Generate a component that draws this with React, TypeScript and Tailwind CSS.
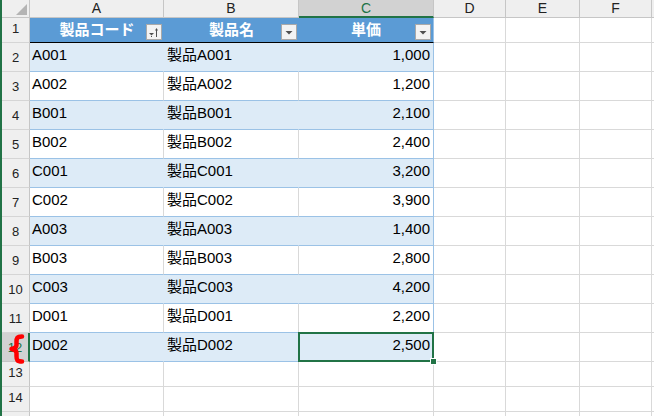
const rows = [
  ["A001", "製品A001", "1,000"],
  ["A002", "製品A002", "1,200"],
  ["B001", "製品B001", "2,100"],
  ["B002", "製品B002", "2,400"],
  ["C001", "製品C001", "3,200"],
  ["C002", "製品C002", "3,900"],
  ["A003", "製品A003", "1,400"],
  ["B003", "製品B003", "2,800"],
  ["C003", "製品C003", "4,200"],
  ["D001", "製品D001", "2,200"],
  ["D002", "製品D002", "2,500"],
];

const font = { fontFamily: '"Liberation Sans", "Noto Sans CJK JP", sans-serif' };

function FilterButton({ sorted }: { sorted?: boolean }) {
  return (
    <div className="absolute right-[2px] top-[6px] w-[16px] h-[16px] bg-[#f3f3f3] border border-[#a9a9a9] flex items-center justify-center">
      {sorted ? (
        <svg width="12" height="12" viewBox="0 0 12 12">
          <path d="M1 7h5l-2.5 2.5z" fill="#505050" />
          <path d="M3 10h1v1H3z" fill="#505050" />
          <path d="M8.5 3v8" stroke="#505050" strokeWidth="1" />
          <path d="M7 4.5L8.5 2 10 4.5z" fill="#505050" />
        </svg>
      ) : (
        <svg width="12" height="12" viewBox="0 0 12 12">
          <path d="M2.5 5h7L6 8.5z" fill="#505050" />
        </svg>
      )}
    </div>
  );
}

function RowHeader({ n, h, selected }: { n?: number; h: string; selected?: boolean }) {
  return (
    <div
      className={`${h} w-[28px] shrink-0 flex items-end justify-center pb-[4px] text-[13px] border-b ${
        selected
          ? "bg-[#d2d2d2] text-[#217346] border-r-2 border-r-[#217346] border-b-[#c6c6c6]"
          : "bg-[#efefef] text-[#222] border-r border-r-[#c6c6c6] border-b-[#d5d5d5]"
      }`}
    >
      {n}
    </div>
  );
}

function EmptyCells({ h }: { h: string }) {
  return (
    <>
      <div className={`${h} w-[72px] shrink-0 border-r border-b border-[#d9d9d9]`} />
      <div className={`${h} w-[74px] shrink-0 border-r border-b border-[#d9d9d9]`} />
      <div className={`${h} w-[72px] shrink-0 border-r border-b border-[#d9d9d9]`} />
      <div className={`${h} flex-1 border-b border-[#d9d9d9]`} />
    </>
  );
}

export default function App() {
  return (
    <div className="relative w-[654px] h-[416px] overflow-hidden bg-white flex text-black" style={font}>
      <div className="w-[2px] shrink-0 bg-[#217346]" />
      <div className="flex-1 flex flex-col">
        {/* column letters */}
        <div className="flex h-[18px] shrink-0 text-[14px] text-[#222]">
          <div className="w-[28px] shrink-0 bg-[#efefef] border-r border-b border-[#c6c6c6] flex items-end justify-end pr-[2px] pb-[2px]">
            <svg width="11" height="11" viewBox="0 0 11 11">
              <path d="M11 0V11H0z" fill="#b4b4b4" />
            </svg>
          </div>
          <div className="w-[134px] shrink-0 bg-[#efefef] border-r border-b border-[#c6c6c6] flex items-center justify-center">A</div>
          <div className="w-[135px] shrink-0 bg-[#efefef] border-r border-b border-[#c6c6c6] flex items-center justify-center">B</div>
          <div className="w-[135px] shrink-0 bg-[#d2d2d2] border-r border-r-[#c6c6c6] border-b-2 border-b-[#217346] text-[#217346] flex items-center justify-center">C</div>
          <div className="w-[72px] shrink-0 bg-[#efefef] border-r border-b border-[#c6c6c6] flex items-center justify-center">D</div>
          <div className="w-[74px] shrink-0 bg-[#efefef] border-r border-b border-[#c6c6c6] flex items-center justify-center">E</div>
          <div className="w-[72px] shrink-0 bg-[#efefef] border-r border-b border-[#c6c6c6] flex items-center justify-center">F</div>
          <div className="flex-1 bg-[#efefef] border-b border-[#c6c6c6]" />
        </div>

        {/* table header row */}
        <div className="flex h-[25px] shrink-0">
          <RowHeader n={1} h="h-[25px]" />
          <div className="relative w-[134px] shrink-0 bg-[#5b9bd5] border-b border-black flex items-center justify-center text-white font-bold text-[15px]">
            製品コード
            <FilterButton sorted />
          </div>
          <div className="relative w-[135px] shrink-0 bg-[#5b9bd5] border-b border-black flex items-center justify-center text-white font-bold text-[15px]">
            製品名
            <FilterButton />
          </div>
          <div className="relative w-[135px] shrink-0 bg-[#5b9bd5] border-b border-black border-r border-r-[#9bc2e6] flex items-center justify-center text-white font-bold text-[15px]">
            単価
            <FilterButton />
          </div>
          <EmptyCells h="h-[25px]" />
        </div>

        {/* data rows */}
        {rows.map((r, i) => {
          const band = i % 2 === 0;
          const selected = i === rows.length - 1;
          const bg = band ? "bg-[#ddebf7]" : "bg-white";
          const vline = band ? "border-r-[#ddebf7]" : "border-r-[#d9d9d9]";
          return (
            <div key={r[0]} className="flex h-[29px] shrink-0 text-[15px]">
              <RowHeader n={i + 2} h="h-[29px]" selected={selected} />
              <div className={`w-[134px] shrink-0 ${bg} border-r ${vline} border-b border-b-[#9bc2e6] flex items-end pb-[5px] pl-[2px]`}>
                {r[0]}
              </div>
              <div className={`w-[135px] shrink-0 ${bg} border-r ${vline} border-b border-b-[#9bc2e6] flex items-end pb-[5px] pl-[3px]`}>
                {r[1]}
              </div>
              <div className={`relative w-[135px] shrink-0 ${bg} border-r border-r-[#9bc2e6] border-b border-b-[#9bc2e6] flex items-end justify-end pb-[5px] pr-[3px]`}>
                {r[2]}
                {selected && (
                  <>
                    <div className="absolute -left-[1px] -top-[1px] -right-[1px] -bottom-[1px] border-2 border-[#217346]" />
                    <div className="absolute -right-[4px] -bottom-[4px] w-[7px] h-[7px] bg-[#217346] border border-white" />
                  </>
                )}
              </div>
              <EmptyCells h="h-[29px]" />
            </div>
          );
        })}

        {/* empty rows */}
        {[13, 14, undefined].map((n, i) => (
          <div key={i} className="flex h-[25px] shrink-0">
            <RowHeader n={n} h="h-[25px]" />
            <div className="h-[25px] w-[134px] shrink-0 border-r border-b border-[#d9d9d9]" />
            <div className="h-[25px] w-[135px] shrink-0 border-r border-b border-[#d9d9d9]" />
            <div className="h-[25px] w-[135px] shrink-0 border-r border-b border-[#d9d9d9]" />
            <EmptyCells h="h-[25px]" />
          </div>
        ))}
      </div>

      {/* red bracket mark over row 12 header */}
      <svg className="absolute left-[7px] top-[334px]" width="18" height="30" viewBox="0 0 18 30">
        <path
          d="M15 2.5C10 2.5 9.5 4 9.5 8v3c0 2-1.5 3.5-5 4 3.5.5 5 2 5 4v3c0 4 .5 5.5 5.5 5.5"
          fill="none"
          stroke="#ff0000"
          strokeWidth="4.5"
          strokeLinecap="round"
          strokeLinejoin="round"
        />
      </svg>
    </div>
  );
}
